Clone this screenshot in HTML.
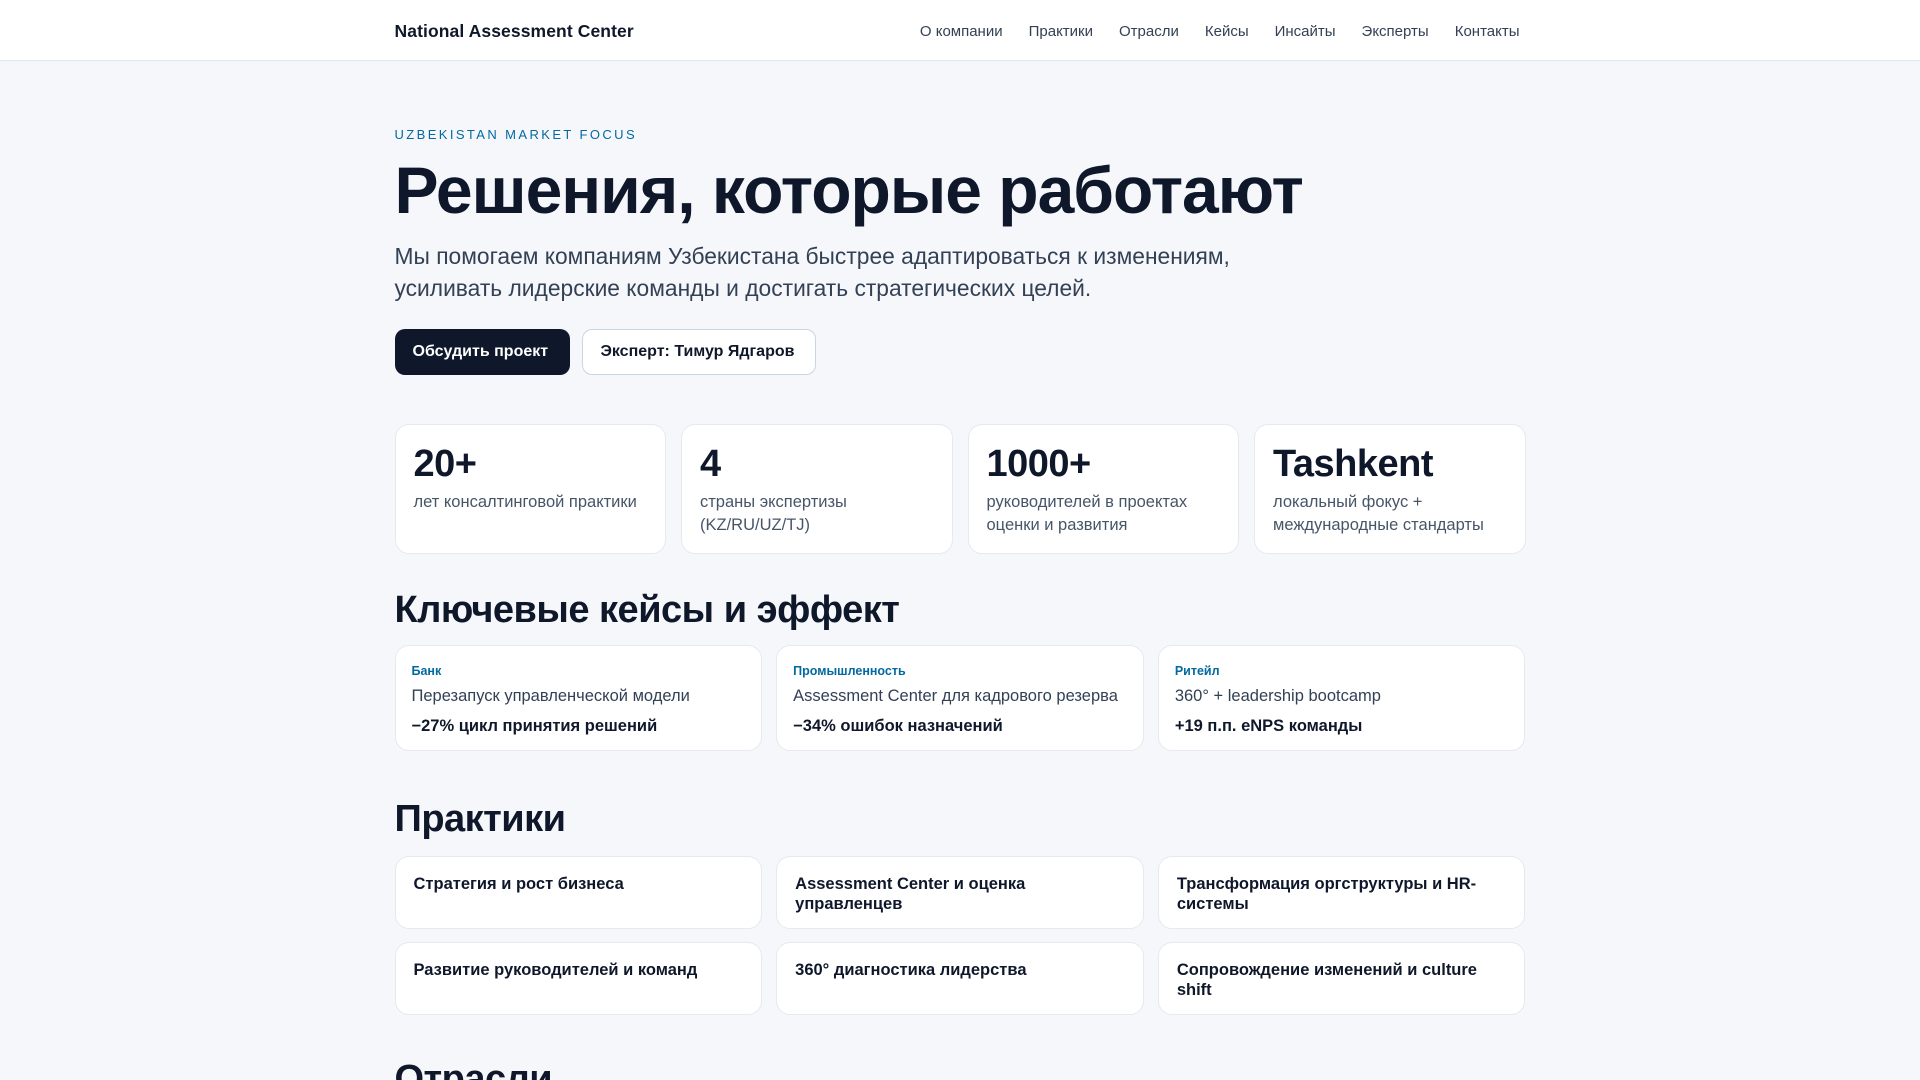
<!DOCTYPE html>
<html><head><meta charset="utf-8"><style>
*{box-sizing:border-box;margin:0;padding:0}
html{overflow:hidden;height:1080px}
body{width:1920px;height:1080px;overflow:hidden;background:#f6f7fb;font-family:"Liberation Sans",sans-serif;color:#0f172a}
header{height:61px;background:#fff;border-bottom:1px solid #e2e8f0}
.wrap{width:1131px;margin:0 auto;position:relative}
.hd{display:flex;justify-content:space-between;align-items:center;height:60px;padding-top:2px}
.logo{font-weight:700;font-size:17.5px;letter-spacing:.1px}
nav{display:flex;gap:26px;font-size:15px;color:#334155;margin-right:6px}
.eb{position:absolute;top:66px;font-size:13px;letter-spacing:2.4px;color:#0369a1}
h1{position:absolute;top:89px;font-size:66px;font-weight:700;letter-spacing:-1px;line-height:80px;white-space:nowrap}
.lead{position:absolute;top:179px;font-size:22.8px;line-height:32px;color:#334155;width:930px}
.btns{position:absolute;top:268px;display:flex;gap:12px}
.b{height:46px;border-radius:10px;font-weight:700;font-size:16px;display:flex;align-items:center;padding:0 18px}
.b1{background:#0f172a;color:#fff;width:175px}
.b2{background:#fff;border:1px solid #cbd5e1;width:234px}
.stats{position:absolute;top:363px;display:grid;grid-template-columns:repeat(4,1fr);gap:15px;width:1131px}
.card{background:#fff;border:1px solid #e5e9f0;border-radius:14px}
.st{height:130px;padding:16px 18px}
.st b{display:block;font-size:38px;line-height:46px;letter-spacing:-.5px}
.st span{display:block;font-size:16.5px;line-height:23px;color:#475569;margin-top:4px}
h2{position:absolute;font-size:38px;font-weight:700;letter-spacing:-.5px}
.cases{position:absolute;top:584px;display:grid;grid-template-columns:repeat(3,1fr);gap:14px;width:1131px}
.cs{height:106px;padding:16px 16px}
.cs i{font-style:normal;display:block;font-size:12.5px;font-weight:700;color:#0369a1;line-height:18px}
.cs p{font-size:16.5px;color:#334155;margin-top:5px;line-height:22px}
.cs b{display:block;font-size:16.5px;margin-top:8px;line-height:22px}
.pr{position:absolute;top:795px;display:grid;grid-template-columns:repeat(3,1fr);gap:13px 14px;width:1131px}
.pc{height:73px;padding:17px 18px;font-weight:700;font-size:16.5px;line-height:20px}
</style></head><body>
<header><div class="wrap hd"><div class="logo">National Assessment Center</div>
<nav><span>О компании</span><span>Практики</span><span>Отрасли</span><span>Кейсы</span><span>Инсайты</span><span>Эксперты</span><span>Контакты</span></nav></div></header>
<div class="wrap">
<div class="eb">UZBEKISTAN MARKET FOCUS</div>
<h1>Решения, которые работают</h1>
<div class="lead">Мы помогаем компаниям Узбекистана быстрее адаптироваться к изменениям, усиливать лидерские команды и достигать стратегических целей.</div>
<div class="btns"><div class="b b1">Обсудить проект</div><div class="b b2">Эксперт: Тимур Ядгаров</div></div>
<div class="stats">
<div class="card st"><b>20+</b><span>лет консалтинговой практики</span></div>
<div class="card st"><b>4</b><span>страны экспертизы (KZ/RU/UZ/TJ)</span></div>
<div class="card st"><b>1000+</b><span>руководителей в проектах оценки и развития</span></div>
<div class="card st"><b>Tashkent</b><span>локальный фокус + международные стандарты</span></div>
</div>
<h2 style="top:528px">Ключевые кейсы и эффект</h2>
<div class="cases">
<div class="card cs"><i>Банк</i><p>Перезапуск управленческой модели</p><b>−27% цикл принятия решений</b></div>
<div class="card cs"><i>Промышленность</i><p>Assessment Center для кадрового резерва</p><b>−34% ошибок назначений</b></div>
<div class="card cs"><i>Ритейл</i><p>360° + leadership bootcamp</p><b>+19 п.п. eNPS команды</b></div>
</div>
<h2 style="top:737px">Практики</h2>
<div class="pr">
<div class="card pc">Стратегия и рост бизнеса</div>
<div class="card pc">Assessment Center и оценка управленцев</div>
<div class="card pc">Трансформация оргструктуры и HR-системы</div>
<div class="card pc">Развитие руководителей и команд</div>
<div class="card pc">360° диагностика лидерства</div>
<div class="card pc">Сопровождение изменений и culture shift</div>
</div>
<h2 style="top:997px">Отрасли</h2>
</div>
</body></html>
